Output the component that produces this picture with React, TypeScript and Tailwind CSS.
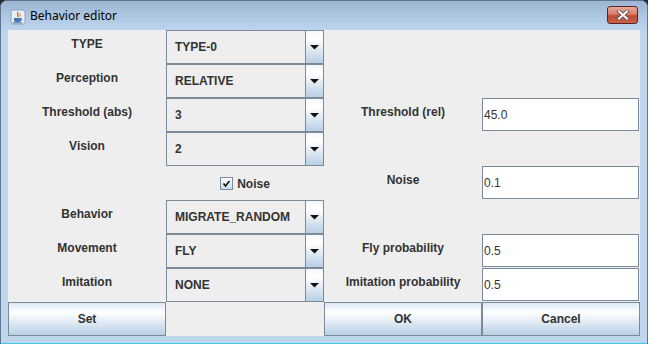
import React from "react";

const font = { fontFamily: '"Liberation Sans", Arial, sans-serif' };

function Label({ text }: { text: string }) {
  return (
    <div className="flex justify-center pt-[7px] text-[12px] leading-[15px] font-bold text-[#333333]">
      {text}
    </div>
  );
}

function Combo({ value }: { value: string }) {
  return (
    <div className="flex h-full border border-[#7a8a99] bg-[#eeeeee]">
      <div className="flex flex-1 items-center pl-[8px] text-[12px] font-bold text-[#333333]">{value}</div>
      <div className="flex w-[18px] items-center justify-center border-l border-[#7a8a99] bg-[linear-gradient(to_bottom,#f4f8fc_0%,#ffffff_25%,#b8cfe5_100%)]">
        <svg width="9" height="5" viewBox="0 0 9 5">
          <polygon points="0,0 9,0 4.5,4.5" fill="#111111" />
        </svg>
      </div>
    </div>
  );
}

function Field({ value }: { value: string }) {
  return (
    <div className="mr-[1px] flex h-[33px] items-center border border-[#7a8a99] bg-white pl-[1px] text-[12px] text-[#333333]">
      {value}
    </div>
  );
}

function Button({ text }: { text: string }) {
  return (
    <button
      type="button"
      className="flex h-full w-full items-center justify-center border border-[#7a8a99] bg-[linear-gradient(to_bottom,#dde8f3_0%,#ffffff_30%,#b8cfe5_100%)] text-[12px] font-bold text-[#333333]"
    >
      {text}
    </button>
  );
}

export default function App() {
  return (
    <div className="h-[344px] w-[648px] overflow-hidden bg-[#262a30]" style={font}>
      <div className="flex h-full flex-col rounded-t-[7px] border border-b-0 border-[#5e7590] bg-[#bfd5ec]">
        {/* Title bar */}
        <div className="flex h-[29px] items-center rounded-t-[6px] bg-[linear-gradient(to_bottom,#9bb5d3_0%,#b0c9e4_60%,#bdd4ed_100%)] pl-[9px] pr-[9px]">
          <svg width="16" height="16" viewBox="0 0 16 16" className="mt-[2px]">
            <rect x="1" y="1" width="14" height="14" rx="2" fill="#e8eef6" stroke="#8ea3bd" />
            <path d="M8 3c-2 1.5 1.5 2.5-0.5 5" stroke="#e06a1e" strokeWidth="1.4" fill="none" />
            <path d="M10 4.5c-1.2 1 1 1.6-0.3 3" stroke="#e06a1e" strokeWidth="1" fill="none" />
            <path d="M4 9h7v2.2c0 1-1 1.8-2 1.8H6c-1 0-2-0.8-2-1.8z" fill="#4a76b0" />
            <path d="M11 9.5c1.5 0 1.5 2-0.3 2" stroke="#4a76b0" strokeWidth="0.9" fill="none" />
            <rect x="3" y="13.3" width="9" height="1" fill="#4a76b0" />
          </svg>
          <span className="ml-[4px] text-[12px] text-black" style={{ fontFamily: '"Noto Sans", "Liberation Sans", sans-serif' }}>
            Behavior editor
          </span>
          <div className="ml-auto mb-[2px] flex h-[18px] w-[31px] items-center justify-center rounded-[3px] border border-[#5a2424] bg-[linear-gradient(to_bottom,#e7aa9c_0%,#d77c66_45%,#c24a32_55%,#c9604a_100%)]">
            <svg width="14" height="10" viewBox="0 0 14 10">
              <path d="M3 1.5l8 7M11 1.5l-8 7" stroke="#4d4d55" strokeWidth="3.6" strokeLinecap="square" />
              <path d="M3 1.5l8 7M11 1.5l-8 7" stroke="#ffffff" strokeWidth="2" strokeLinecap="square" />
            </svg>
          </div>
        </div>

        {/* Content */}
        <div className="flex flex-1 flex-col px-[7px] pb-[7px]">
          <div className="grid h-[306px] grid-cols-[repeat(4,158px)] grid-rows-[repeat(9,34px)] bg-[#eeeeee]">
            <Label text="TYPE" />
            <Combo value="TYPE-0" />
            <div />
            <div />

            <Label text="Perception" />
            <Combo value="RELATIVE" />
            <div />
            <div />

            <Label text="Threshold (abs)" />
            <Combo value="3" />
            <Label text="Threshold (rel)" />
            <Field value="45.0" />

            <Label text="Vision" />
            <Combo value="2" />
            <div />
            <div />

            <div />
            <div className="flex items-center justify-center gap-[4px] pt-[1px]">
              <div className="flex h-[13px] w-[13px] items-center justify-center border border-[#7a8a99] bg-[linear-gradient(to_bottom,#ffffff_0%,#c9dbed_100%)]">
                <svg width="9" height="9" viewBox="0 0 9 9">
                  <path d="M1.5 4.5l2 2.5L7.5 2" stroke="#111111" strokeWidth="1.6" fill="none" />
                </svg>
              </div>
              <span className="text-[12px] font-bold text-[#333333]">Noise</span>
            </div>
            <Label text="Noise" />
            <Field value="0.1" />

            <Label text="Behavior" />
            <Combo value="MIGRATE_RANDOM" />
            <div />
            <div />

            <Label text="Movement" />
            <Combo value="FLY" />
            <Label text="Fly probability" />
            <Field value="0.5" />

            <Label text="Imitation" />
            <Combo value="NONE" />
            <Label text="Imitation probability" />
            <Field value="0.5" />

            <Button text="Set" />
            <div />
            <Button text="OK" />
            <Button text="Cancel" />
          </div>
        </div>
        <div className="h-px bg-[#3fc6e2]" />
      </div>
    </div>
  );
}
